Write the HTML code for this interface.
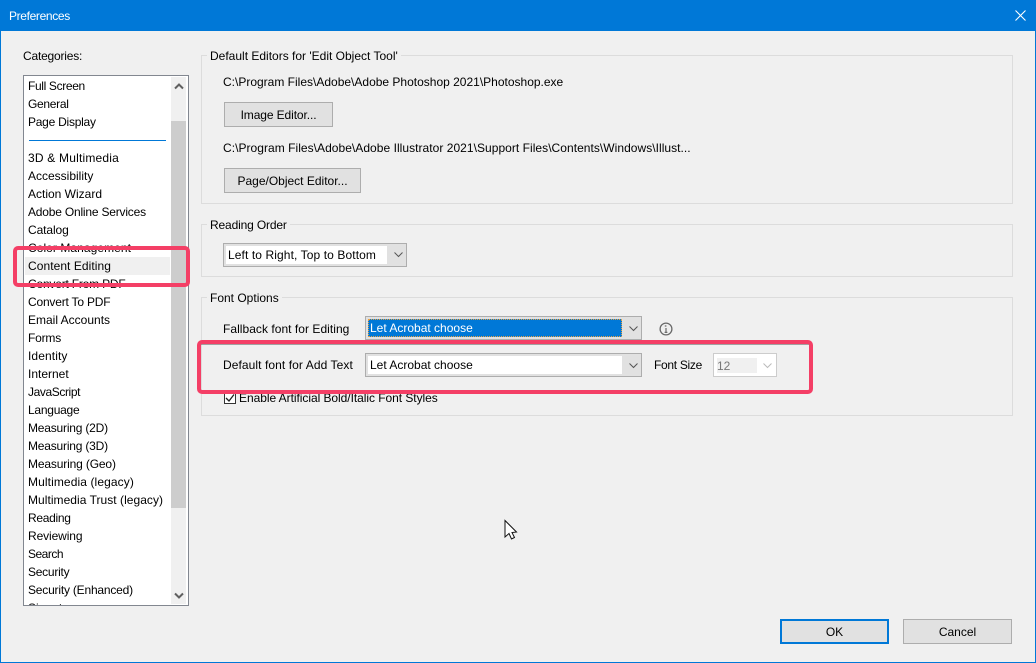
<!DOCTYPE html>
<html><head><meta charset="utf-8"><style>
html,body{margin:0;padding:0;width:1036px;height:663px;overflow:hidden;background:#f0f0f0}
body{font-family:"Liberation Sans",sans-serif;font-size:12px;color:#000;position:relative}
div{position:absolute;box-sizing:border-box}
.t{white-space:nowrap;line-height:18px;height:18px}
.g{border:1px solid #dcdcdc;left:201px;width:812px}
.l{background:#f0f0f0;padding:0 3px 0 3px;left:207px}
.b{background:#e1e1e1;border:1px solid #adadad;text-align:center;line-height:25px;white-space:nowrap}
.c{background:#e1e1e1;border:1px solid #adadad}
.i{left:4px;white-space:nowrap;line-height:18px;height:18px}
svg{position:absolute;overflow:visible}
</style></head><body>
<div style="left:0;top:0;width:1036px;height:663px;border:1px solid #0078d7"></div>
<div style="left:0;top:0;width:1036px;height:31px;background:#0078d7"></div>
<div class="t" style="left:9px;top:7px;color:#fff;letter-spacing:-.35px">Preferences</div>
<svg style="left:1015px;top:10px" width="11" height="11"><path d="M.5.5L10.5 10.5M10.5.5L.5 10.5" stroke="#fff" stroke-width="1.1" fill="none"/></svg>

<div class="t" style="left:23px;top:47px;letter-spacing:-.2px">Categories:</div>
<div style="left:23px;top:75px;width:166px;height:531px;border:1px solid #828790;background:#fff;overflow:hidden;">
<div class="i" style="top:1px;letter-spacing:-.35px">Full Screen</div>
<div class="i" style="top:19px;letter-spacing:-.3px">General</div>
<div class="i" style="top:37px;letter-spacing:-.25px">Page Display</div>
<div style="left:5px;top:64px;width:137px;height:1px;background:#0078d7"></div>
<div class="i" style="top:73px;letter-spacing:.2px">3D &amp; Multimedia</div>
<div class="i" style="top:91px">Accessibility</div>
<div class="i" style="top:109px">Action Wizard</div>
<div class="i" style="top:127px;letter-spacing:-.2px">Adobe Online Services</div>
<div class="i" style="top:145px;letter-spacing:-.1px">Catalog</div>
<div class="i" style="top:163px;letter-spacing:.06px">Color Management</div>
<div style="left:1px;top:181px;width:145px;height:18px;background:#f0f0f0"></div>
<div class="i" style="top:181px;letter-spacing:.06px">Content Editing</div>
<div class="i" style="top:199px;letter-spacing:-.2px">Convert From PDF</div>
<div class="i" style="top:217px;letter-spacing:-.2px">Convert To PDF</div>
<div class="i" style="top:235px">Email Accounts</div>
<div class="i" style="top:253px;letter-spacing:-.2px">Forms</div>
<div class="i" style="top:271px;letter-spacing:.1px">Identity</div>
<div class="i" style="top:289px">Internet</div>
<div class="i" style="top:307px;letter-spacing:-.4px">JavaScript</div>
<div class="i" style="top:325px;letter-spacing:-.25px">Language</div>
<div class="i" style="top:343px;letter-spacing:-.2px">Measuring (2D)</div>
<div class="i" style="top:361px;letter-spacing:-.2px">Measuring (3D)</div>
<div class="i" style="top:379px;letter-spacing:-.15px">Measuring (Geo)</div>
<div class="i" style="top:397px;letter-spacing:.1px">Multimedia (legacy)</div>
<div class="i" style="top:415px;letter-spacing:.04px">Multimedia Trust (legacy)</div>
<div class="i" style="top:433px;letter-spacing:-.3px">Reading</div>
<div class="i" style="top:451px;letter-spacing:-.1px">Reviewing</div>
<div class="i" style="top:469px;letter-spacing:-.5px">Search</div>
<div class="i" style="top:487px;letter-spacing:-.25px">Security</div>
<div class="i" style="top:505px;letter-spacing:-.2px">Security (Enhanced)</div>
<div class="i" style="top:523px">Signatures</div>
<div style="left:147px;top:1px;width:15px;height:527px;background:#f0f0f0"></div>
<div style="left:147px;top:45px;width:15px;height:387px;background:#cdcdcd"></div>
</div>
<svg style="left:174px;top:83px" width="10" height="7"><path d="M1 5.500L5 1.500L9 5.500" stroke="#606060" stroke-width="2" fill="none"/></svg>
<svg style="left:174px;top:592px" width="10" height="7"><path d="M1 1.500L5 5.500L9 1.500" stroke="#606060" stroke-width="2" fill="none"/></svg>

<div class="g" style="top:55px;height:149px"></div>
<div class="t l" style="top:47px">Default Editors for 'Edit Object Tool'</div>
<div class="t" style="left:223px;top:73px">C:\Program Files\Adobe\Adobe Photoshop 2021\Photoshop.exe</div>
<div class="b" style="left:224px;top:102px;width:109px;height:25px;letter-spacing:-.1px">Image Editor...</div>
<div class="t" style="left:223px;top:139px;letter-spacing:.04px">C:\Program Files\Adobe\Adobe Illustrator 2021\Support Files\Contents\Windows\Illust...</div>
<div class="b" style="left:224px;top:168px;width:137px;height:25px">Page/Object Editor...</div>

<div class="g" style="top:224px;height:53px"></div>
<div class="t l" style="top:216px;letter-spacing:-.15px">Reading Order</div>
<div class="c" style="left:223px;top:243px;width:184px;height:24px"></div>
<div style="left:226px;top:246px;width:161px;height:18px;background:#fff"></div>
<div class="t" style="left:228px;top:246px;letter-spacing:.1px">Left to Right, Top to Bottom</div>
<svg style="left:394px;top:252px" width="10" height="6"><path d="M.5.5L4.500 4.500L8.500.5" stroke="#555" stroke-width="1" fill="none"/></svg>

<div class="g" style="top:297px;height:119px"></div>
<div class="t l" style="top:289px">Font Options</div>
<div class="t" style="left:223px;top:320px;letter-spacing:.04px">Fallback font for Editing</div>
<div class="c" style="left:365px;top:316px;width:277px;height:24px"></div>
<div style="left:368px;top:319px;width:254px;height:18px;background:#0078d7;outline:1px dotted #e8a040;outline-offset:-1px"></div>
<div class="t" style="left:370px;top:319px;color:#fff">Let Acrobat choose</div>
<svg style="left:629px;top:326px" width="10" height="6"><path d="M.5.5L4.500 4.500L8.500.5" stroke="#555" stroke-width="1" fill="none"/></svg>
<svg style="left:659px;top:322px" width="14" height="14"><circle cx="7" cy="7" r="5.900" fill="none" stroke="#6a6a6a" stroke-width="1.300"/><path d="M5.800 4h1.600M7 6v4.200M5.600 10.400h2.800" stroke="#6a6a6a" stroke-width="1.200" fill="none"/></svg>

<div class="t" style="left:223px;top:356px;letter-spacing:.08px">Default font for Add Text</div>
<div class="c" style="left:365px;top:353px;width:277px;height:24px"></div>
<div style="left:368px;top:356px;width:254px;height:18px;background:#fff"></div>
<div class="t" style="left:370px;top:356px">Let Acrobat choose</div>
<svg style="left:629px;top:363px" width="10" height="6"><path d="M.5.5L4.500 4.500L8.500.5" stroke="#555" stroke-width="1" fill="none"/></svg>
<div class="t" style="left:654px;top:356px;letter-spacing:-.3px">Font Size</div>
<div style="left:713px;top:353px;width:64px;height:24px;background:#fff;border:1px solid #ccc"></div>
<div style="left:717px;top:358px;width:40px;height:15px;background:#f0f0f0"></div>
<div class="t" style="left:717px;top:357px;color:#777">12</div>
<svg style="left:763px;top:363px" width="10" height="6"><path d="M.5.5L4.500 4.500L8.500.5" stroke="#bbb" stroke-width="1" fill="none"/></svg>

<div style="left:224px;top:392px;width:12px;height:12px;background:#fff;border:1px solid #333"></div>
<svg style="left:225px;top:393px" width="10" height="10"><path d="M1 5L4 8L9 1.500" stroke="#222" stroke-width="1.300" fill="none"/></svg>
<div class="t" style="left:239px;top:389px;letter-spacing:-.05px">Enable Artificial Bold/Italic Font Styles</div>

<svg style="left:0;top:0" width="1036" height="663">
<path d="M201 344.500H809" stroke="#808080" stroke-width="1" opacity=".7"/>
<rect x="199" y="342" width="612" height="50" rx="3" fill="none" stroke="#f43f66" stroke-width="4"/>
<rect x="15" y="248" width="173" height="37" rx="3" fill="none" stroke="#f43f66" stroke-width="4"/>
<path d="M505 520.500V537L509 533.500L511.500 539L514.500 537.500L512 532.500L516.500 532Z" fill="#fff" stroke="#111" stroke-width="1"/>
</svg>

<div class="b" style="left:780px;top:619px;width:109px;height:25px;border:2px solid #0078d7;line-height:23px">OK</div>
<div class="b" style="left:903px;top:619px;width:109px;height:25px">Cancel</div>
</body></html>
